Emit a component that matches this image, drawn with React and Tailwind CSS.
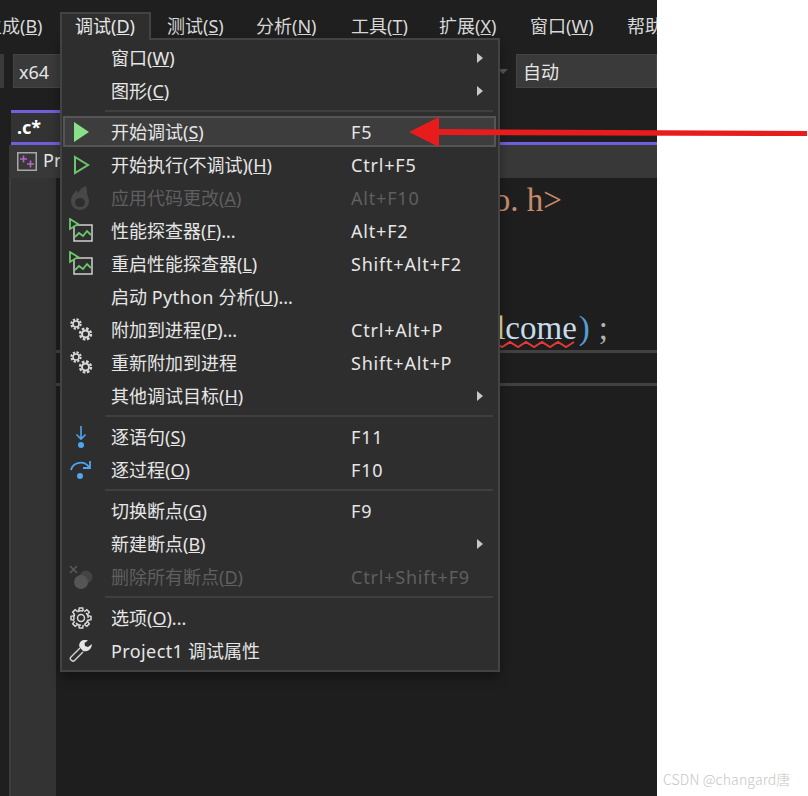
import React from 'react';

const FONT = "font-['Noto_Sans','Noto_Sans_CJK_SC',sans-serif]";

function Play({ filled }) {
  return (
    <svg width="20" height="22" viewBox="0 0 20 22">
      {filled ? (
        <polygon points="3,1 18,11 3,21" fill="#88e088" />
      ) : (
        <polygon points="4,3 17,11 4,19" fill="none" stroke="#6cc76c" strokeWidth="2" />
      )}
    </svg>
  );
}

function Flame() {
  return (
    <svg width="24" height="26" viewBox="0 0 24 26">
      <path
        d="M17 1c-6 2-6 5-8 7-1-1-1-2-1-3-3 3-6 6-6 11 0 5 4 9 9 9s9-4 9-9c0-3-2-5-2-8 0-3 0-5-1-7zM11 13c3 0 5 2 5 4.500S14 22 11 22s-5-2-5-4.500S8 13 11 13z"
        fill="#484848"
        fillRule="evenodd"
      />
    </svg>
  );
}

function Profiler() {
  return (
    <svg width="26" height="25" viewBox="0 0 26 25">
      <rect x="6" y="7" width="18" height="16" fill="none" stroke="#d0d0d0" strokeWidth="1.500" />
      <polyline points="7,19 11,15 15,18 19,13 23,17" fill="none" stroke="#6cc76c" strokeWidth="1.800" />
      <polygon points="2,1 10,6 2,11" fill="#2e2e2e" stroke="#6cc76c" strokeWidth="1.800" />
    </svg>
  );
}

function Gears() {
  return (
    <svg width="24" height="24" viewBox="0 0 24 24" fill="none" stroke="#d8d8d8">
      <circle cx="7" cy="6" r="3" strokeWidth="1.600" />
      <circle cx="7" cy="6" r="4.600" strokeWidth="2.200" strokeDasharray="2.200 1.400" />
      <circle cx="16.500" cy="16" r="3.500" strokeWidth="2" />
      <circle cx="16.500" cy="16" r="5.500" strokeWidth="2.400" strokeDasharray="2.600 1.700" />
    </svg>
  );
}

function StepInto() {
  return (
    <svg width="20" height="24" viewBox="0 0 20 24" fill="none" stroke="#4ea6f0" strokeWidth="1.600">
      <path d="M10 1v13M5.500 9.500 10 14l4.500-4.500" />
      <circle cx="10" cy="20" r="3" fill="#4ea6f0" stroke="none" />
    </svg>
  );
}

function StepOver() {
  return (
    <svg width="24" height="22" viewBox="0 0 24 22" fill="none" stroke="#4ea6f0" strokeWidth="1.800">
      <path d="M2 11C4 3 15 1 20 8" />
      <path d="M21 2v7h-7" />
      <circle cx="11" cy="17" r="3" fill="#4ea6f0" stroke="none" />
    </svg>
  );
}

function ClearBreakpoints() {
  return (
    <svg width="26" height="26" viewBox="0 0 26 26">
      <path d="M2 2l7 7M9 2 2 9" stroke="#5a5a5a" strokeWidth="1.500" />
      <circle cx="18" cy="13" r="6.500" fill="#444" />
      <circle cx="13" cy="18" r="7" fill="#555" />
    </svg>
  );
}

function OptionsGear() {
  const teeth = [0, 45, 90, 135, 180, 225, 270, 315];
  return (
    <svg width="24" height="24" viewBox="0 0 24 24" fill="none" stroke="#d8d8d8" strokeWidth="1.500">
      {teeth.map((a) => (
        <path key={a} d="M9.800 5.200 10.300 2h3.400l.5 3.200" transform={`rotate(${a} 12 12)`} />
      ))}
      <circle cx="12" cy="12" r="7.200" strokeDasharray="5.700 3.700" strokeDashoffset="-1.800" />
      <circle cx="12" cy="12" r="3.500" />
    </svg>
  );
}

function Wrench() {
  return (
    <svg width="24" height="24" viewBox="0 0 24 24">
      <path
        d="M11 9 2 18c-1 1-1 2 0 3s2.500 1.500 3.500.5L14 13"
        fill="none"
        stroke="#d4d4d4"
        strokeWidth="1.400"
      />
      <path d="M15 1c-3.500.5-5.500 3.500-4.500 7l3.500 4c3 1 8.500-.5 9-7l-4 3-3-1-.5-3L19 1.500C18 1 16 1 15 1z" fill="#e4e4e4" />
    </svg>
  );
}

function MenuRow({ icon, label, shortcut, submenu, disabled, active }) {
  return (
    <div
      className={`flex items-center h-[31px] shrink-0 my-px ml-px mr-[2px] border-2 ${
        active ? 'bg-[#3d3d3d] border-[#555555]' : 'border-transparent'
      } ${disabled ? 'text-[#5f5f5f]' : 'text-[#e6e6e6]'}`}
    >
      <div className="w-[32px] flex items-center justify-center shrink-0">{icon}</div>
      <div className="w-[240px] ml-[14px] shrink-0 whitespace-nowrap">{label}</div>
      <div className="whitespace-nowrap tracking-[0.8px]">{shortcut}</div>
      {submenu && (
        <div className="ml-auto mr-[11px] w-0 h-0 border-y-[5px] border-y-transparent border-l-[6px] border-l-[#c8c8c8]" />
      )}
    </div>
  );
}

function MenuSep() {
  return <div className="h-[2px] shrink-0 my-[3px] ml-[43px] mr-[5px] bg-[#3f3f3f]" />;
}

function DebugMenu() {
  return (
    <div className={`absolute left-[60px] top-[38px] w-[440px] h-[634px] flex flex-col bg-[#2e2e2e] border-2 border-[#434343] pt-[1px] text-[18px] leading-none shadow-[0_6px_10px_rgba(0,0,0,0.35)] ${FONT}`}>
      <MenuRow label={<>窗口(<u>W</u>)</>} submenu />
      <MenuRow label={<>图形(<u>C</u>)</>} submenu />
      <MenuSep />
      <MenuRow active icon={<Play filled />} label={<>开始调试(<u>S</u>)</>} shortcut="F5" />
      <MenuRow icon={<Play />} label={<>开始执行(不调试)(<u>H</u>)</>} shortcut="Ctrl+F5" />
      <MenuRow disabled icon={<Flame />} label={<>应用代码更改(<u>A</u>)</>} shortcut="Alt+F10" />
      <MenuRow icon={<Profiler />} label={<>性能探查器(<u>F</u>)...</>} shortcut="Alt+F2" />
      <MenuRow icon={<Profiler />} label={<>重启性能探查器(<u>L</u>)</>} shortcut="Shift+Alt+F2" />
      <MenuRow label={<>启动 <span className="tracking-[0.4px]">Python</span> 分析(<u>U</u>)...</>} />
      <MenuRow icon={<Gears />} label={<>附加到进程(<u>P</u>)...</>} shortcut="Ctrl+Alt+P" />
      <MenuRow icon={<Gears />} label="重新附加到进程" shortcut="Shift+Alt+P" />
      <MenuRow label={<>其他调试目标(<u>H</u>)</>} submenu />
      <MenuSep />
      <MenuRow icon={<StepInto />} label={<>逐语句(<u>S</u>)</>} shortcut="F11" />
      <MenuRow icon={<StepOver />} label={<>逐过程(<u>O</u>)</>} shortcut="F10" />
      <MenuSep />
      <MenuRow label={<>切换断点(<u>G</u>)</>} shortcut="F9" />
      <MenuRow label={<>新建断点(<u>B</u>)</>} submenu />
      <MenuRow disabled icon={<ClearBreakpoints />} label={<>删除所有断点(<u>D</u>)</>} shortcut="Ctrl+Shift+F9" />
      <MenuSep />
      <MenuRow icon={<OptionsGear />} label={<>选项(<u>O</u>)...</>} />
      <MenuRow icon={<Wrench />} label={<><span className="tracking-[0.4px]">Project1</span> 调试属性</>} />
    </div>
  );
}

function MenuBar() {
  return (
    <div className={`flex items-center h-[54px] pb-[2px] ml-[-16px] text-[18px] text-[#d8d8d8] whitespace-nowrap overflow-hidden ${FONT}`}>
      <div className="w-[91px] shrink-0">生成(<u>B</u>)</div>
      <div className="w-[92px] shrink-0">调试(<u>D</u>)</div>
      <div className="w-[89px] shrink-0">测试(<u>S</u>)</div>
      <div className="w-[95px] shrink-0">分析(<u>N</u>)</div>
      <div className="w-[88px] shrink-0">工具(<u>T</u>)</div>
      <div className="w-[91px] shrink-0">扩展(<u>X</u>)</div>
      <div className="w-[97px] shrink-0">窗口(<u>W</u>)</div>
      <div className="w-[60px] shrink-0">帮助(<u>H</u>)</div>
    </div>
  );
}

function Toolbar() {
  return (
    <div className={`flex items-center h-[34px] text-[18px] text-[#e6e6e6] ${FONT}`}>
      <div className="w-[4px] h-full bg-[#3a3a3a]" />
      <div className="w-[470px] h-full ml-[9px] pl-[5px] pt-[2px] flex items-center bg-[#3a3a3a] border border-[#444444]">x64</div>
      <div className="ml-[15px] w-0 h-0 border-x-[5px] border-x-transparent border-t-[5px] border-t-[#555555]" />
      <div className="flex-1 h-full ml-[8px] pl-[6px] pt-[2px] flex items-center bg-[#3a3a3a] border border-[#444444]">自动</div>
    </div>
  );
}

function Tabs() {
  return (
    <div className={`mt-[22px] ml-[11px] ${FONT}`}>
      <div className="w-[60px] h-[32px] pl-[6px] bg-[#333333] border-t-[3px] border-[#6f5fdc] flex items-center text-[18px] font-bold text-white">.c*</div>
      <div className="h-[3px] bg-[#6f5fdc]" />
    </div>
  );
}

function FileNav() {
  return (
    <div className={`ml-[9px] h-[33px] bg-[#383838] flex items-center pl-[8px] text-[18px] text-[#e6e6e6] overflow-hidden ${FONT}`}>
      <svg width="20" height="19" viewBox="0 0 20 19" fill="none">
        <rect x="0.750" y="0.750" width="18.500" height="17.500" stroke="#a8a8a8" strokeWidth="1.500" />
        <path d="M3 7h7M6.500 3.500v7M10 12h7M13.500 8.500v7" stroke="#b565c8" strokeWidth="1.600" />
      </svg>
      <span className="ml-[6px] pb-[3px]">Project1</span>
    </div>
  );
}

function Editor() {
  return (
    <div className="flex-1 flex flex-col bg-[#1e1e1e] font-['Liberation_Serif',serif] text-[33px] leading-[44px] whitespace-nowrap overflow-hidden">
      <div className="h-[44px] flex justify-end pr-[95px] text-[#c98a6b]">#include &lt;stdio. h&gt;</div>
      <div className="relative mt-[84px] h-[44px] flex justify-end pr-[49px]">
        <span className="text-[#dcdcaa]">printf(</span>
        <span className="text-[#dcdcaa]">we</span>
        <span className="text-[#dcdcaa]">l</span>
        <span className="text-[#c6dceb]">come</span>
        <span className="text-[#569cd6] ml-[2px]">)</span>
        <span className="text-[#b4b4b4] ml-[9px]">;</span>
        <svg className="absolute left-[430px] top-[34px]" width="92" height="9" viewBox="0 0 92 9" fill="none">
          <path d="M0 7l8-5 8 5 8-5 8 5 8-5 8 5 8-5 8 5 8-5 8 5 8-5" stroke="#e53935" strokeWidth="2" />
        </svg>
      </div>
      <div className="h-[36px] border-y-[3px] border-[#414141]" />
    </div>
  );
}

export default function App() {
  return (
    <div className="relative flex w-[808px] h-[796px] overflow-hidden bg-white">
      <div className="w-[657px] h-full flex flex-col bg-[#1f1f1f] overflow-hidden">
        <MenuBar />
        <Toolbar />
        <Tabs />
        <FileNav />
        <div className="flex-1 flex ml-[9px]">
          <div className="w-[47px] bg-[#333333] border-l-2 border-[#3d3d3d]" />
          <Editor />
        </div>
      </div>
      <div className="flex-1 flex items-end pl-[6px] pb-[6px]">
        <div className="font-['Noto_Sans_CJK_SC',sans-serif] font-light text-[14px] tracking-[0.15px] text-[#c6c6c6] whitespace-nowrap">CSDN @changard唐</div>
      </div>

      <div className={`absolute left-[60px] top-[12px] w-[91px] h-[28px] z-10 bg-[#2e2e2e] border-2 border-b-0 border-[#434343] pl-[13px] pb-[2px] flex items-center text-[18px] leading-none text-[#e6e6e6] ${FONT}`}>
        调试(<u>D</u>)
      </div>
      <DebugMenu />

      <svg className="absolute left-[409px] top-[115px] z-20" width="399" height="34" viewBox="0 0 399 34">
        <polygon points="0,17 30,2 30,32" fill="#e81c1c" />
        <polygon points="29,14 398,16 398,21 29,20" fill="#e81c1c" />
      </svg>
    </div>
  );
}
